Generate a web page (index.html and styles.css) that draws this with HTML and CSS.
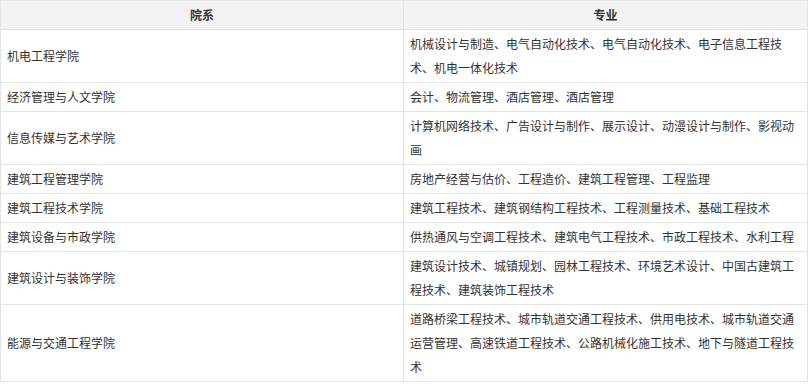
FILE: index.html
```html
<!DOCTYPE html>
<html lang="zh-CN">
<head>
<meta charset="utf-8">
<link rel="stylesheet" href="styles.css">
</head>
<body>
<table class="dept-table">
  <colgroup><col class="col-left"><col class="col-right"></colgroup>
  <thead>
    <tr><th>院系</th><th>专业</th></tr>
  </thead>
  <tbody>
    <tr><td class="dept">机电工程学院</td><td>机械设计与制造、电气自动化技术、电气自动化技术、电子信息工程技术、机电一体化技术</td></tr>
    <tr><td class="dept">经济管理与人文学院</td><td>会计、物流管理、酒店管理、酒店管理</td></tr>
    <tr><td class="dept">信息传媒与艺术学院</td><td>计算机网络技术、广告设计与制作、展示设计、动漫设计与制作、影视动画</td></tr>
    <tr><td class="dept">建筑工程管理学院</td><td>房地产经营与估价、工程造价、建筑工程管理、工程监理</td></tr>
    <tr><td class="dept">建筑工程技术学院</td><td>建筑工程技术、建筑钢结构工程技术、工程测量技术、基础工程技术</td></tr>
    <tr><td class="dept">建筑设备与市政学院</td><td>供热通风与空调工程技术、建筑电气工程技术、市政工程技术、水利工程</td></tr>
    <tr><td class="dept">建筑设计与装饰学院</td><td>建筑设计技术、城镇规划、园林工程技术、环境艺术设计、中国古建筑工程技术、建筑装饰工程技术</td></tr>
    <tr><td class="dept">能源与交通工程学院</td><td>道路桥梁工程技术、城市轨道交通工程技术、供用电技术、城市轨道交通运营管理、高速铁道工程技术、公路机械化施工技术、地下与隧道工程技术</td></tr>
  </tbody>
</table>
</body>
</html>
```

FILE: styles.css
```css
html, body {
  margin: 0;
  padding: 0;
  background: #ffffff;
}

.dept-table {
  width: 807px;
  border-collapse: collapse;
  table-layout: fixed;
  font-family: "Noto Sans CJK SC", "Noto Sans", sans-serif;
  font-size: 12px;
  line-height: 24px;
  color: #333333;
}

.col-left { width: 403px; }
.col-right { width: 404px; }

.dept-table th,
.dept-table td {
  border: 1px solid #e4e4e4;
  padding: 2px 6px;
  text-align: left;
  vertical-align: top;
}

.dept-table th {
  background: #f2f2f2;
  font-weight: bold;
  text-align: center;
}

.dept-table td.dept {
  vertical-align: middle;
}
```
